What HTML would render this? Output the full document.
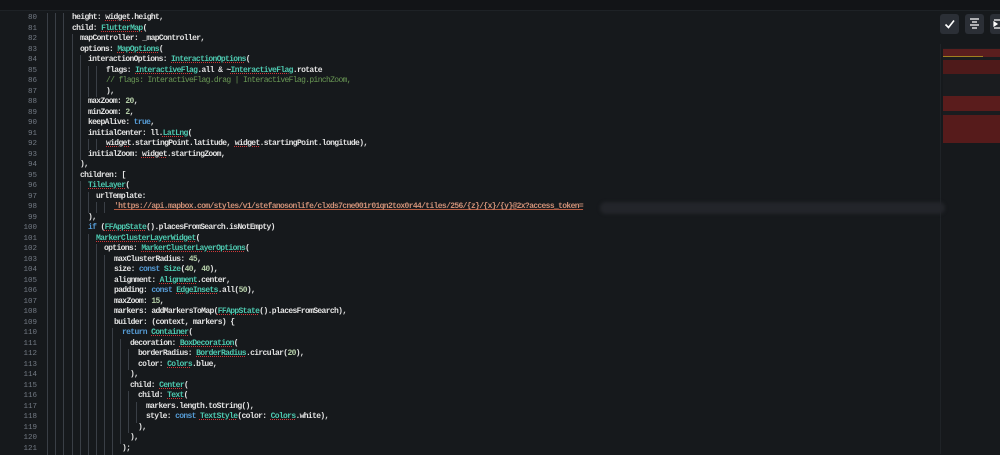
<!DOCTYPE html>
<html><head><meta charset="utf-8"><style>
body{margin:0;width:1000px;height:454px;background:#16191c;overflow:hidden;position:relative;font-family:"Liberation Mono",monospace;}
.top{position:absolute;left:0;top:0;width:1000px;height:10px;background:#121417;border-bottom:1px solid #1e2226}
.ln{position:absolute;left:0;width:37px;text-align:right;color:#737a84;font-size:7.5px;line-height:10.5px}
.l{position:absolute;white-space:pre;color:#e2e2e2;font-size:8px;font-weight:bold;letter-spacing:-0.65px;line-height:10.5px}
.g{position:absolute;width:1px;background:#3a3f46}
.c{color:#4ec9b0}.n{color:#b5cea8}.k{color:#569cd6}.m{color:#6a9955;font-weight:normal}.s{color:#ce9178;text-decoration:underline;text-decoration-color:#b85a40}
.w{text-decoration:underline dotted #d03838;text-decoration-thickness:1px}
.btn{position:absolute;top:14px;width:19px;height:20px;background:#2b2f36;border-radius:3px}
.mm{position:absolute;left:943px;background:#8a1f1f}
</style></head><body>
<div class="top"></div>
<div style="position:absolute;left:940px;top:44px;width:1px;height:410px;background:#1f2327"></div>
<div class="btn" style="left:940px"><svg width="19" height="20"><path d="M5.5 10.5l3 3 5.5-7" stroke="#fff" stroke-width="1.6" fill="none"/></svg></div>
<div class="btn" style="left:965px"><svg width="19" height="20"><path d="M5 5h9M7 8h5M5 11h9M7 14h5" stroke="#fff" stroke-width="1.3"/></svg></div>
<div class="btn" style="left:990px"><svg width="19" height="20"><path d="M4 6h8M4 14h8M4 8v4l3-2z" stroke="#fff" stroke-width="1.2" fill="#fff"/></svg></div>
<div style="position:absolute;left:943px;top:48px;width:57px;height:95px;background:#1a1c1f"></div>
<div class="mm" style="top:49px;height:8px;width:57px;background:#5a1e1e"></div>
<div class="mm" style="top:56px;height:1px;width:40px;background:#a08020"></div>
<div class="mm" style="top:60px;height:14px;width:57px;background:#4e1a1a"></div>
<div class="mm" style="top:96px;height:15px;width:57px;background:#5a1c1c"></div>
<div class="mm" style="top:115px;height:28px;width:57px;background:#561b1b"></div>
<div style="position:absolute;left:600px;top:202px;width:345px;height:12px;background:#23252a;border-radius:6px;filter:blur(1.5px)"></div>
<div id="code"></div>
<script>
const L=[
[72,'height: <span class="w">widget</span>.height,'],
[72,'child: <span class="c w">FlutterMap</span>('],
[80,'mapController: _mapController,'],
[80,'options: <span class="c w">MapOptions</span>('],
[88,'interactionOptions: <span class="c w">InteractionOptions</span>('],
[106,'flags: <span class="c w">InteractiveFlag</span>.all &amp; ~<span class="c w">InteractiveFlag</span>.rotate'],
[106,'<span class="m">// flags: InteractiveFlag.drag | InteractiveFlag.pinchZoom,</span>'],
[106,'),'],
[88,'maxZoom: <span class="n">20</span>,'],
[88,'minZoom: <span class="n">2</span>,'],
[88,'keepAlive: <span class="k">true</span>,'],
[88,'initialCenter: ll.<span class="c w">LatLng</span>('],
[106,'<span class="w">widget</span>.startingPoint.latitude, <span class="w">widget</span>.startingPoint.longitude),'],
[88,'initialZoom: <span class="w">widget</span>.startingZoom,'],
[80,'),'],
[80,'children: ['],
[88,'<span class="c w">TileLayer</span>('],
[96,'urlTemplate:'],
[114,'<span class="s">\'https://api.mapbox.com/styles/v1/stefanosonlife/clxds7cne001r01qn2tox0r44/tiles/256/{z}/{x}/{y}@2x?access_token=</span>'],
[88,'),'],
[88,'<span class="k">if</span> (<span class="c w">FFAppState</span>().placesFromSearch.isNotEmpty)'],
[96,'<span class="c w">MarkerClusterLayerWidget</span>('],
[104,'options: <span class="c w">MarkerClusterLayerOptions</span>('],
[114,'maxClusterRadius: <span class="n">45</span>,'],
[114,'size: <span class="k">const</span> <span class="c">Size</span>(<span class="n">40</span>, <span class="n">40</span>),'],
[114,'alignment: <span class="c w">Alignment</span>.center,'],
[114,'padding: <span class="k">const</span> <span class="c w">EdgeInsets</span>.all(<span class="n">50</span>),'],
[114,'maxZoom: <span class="n">15</span>,'],
[114,'markers: addMarkersToMap(<span class="c w">FFAppState</span>().placesFromSearch),'],
[114,'builder: (context, markers) {'],
[122,'<span class="k">return</span> <span class="c w">Container</span>('],
[130,'decoration: <span class="c w">BoxDecoration</span>('],
[138,'borderRadius: <span class="c w">BorderRadius</span>.circular(<span class="n">20</span>),'],
[138,'color: <span class="c w">Colors</span>.blue,'],
[130,'),'],
[130,'child: <span class="c w">Center</span>('],
[138,'child: <span class="c w">Text</span>('],
[146,'markers.length.toString(),'],
[146,'style: <span class="k">const</span> <span class="c w">TextStyle</span>(color: <span class="c w">Colors</span>.white),'],
[138,'),'],
[130,'),'],
[122,');']
];
let h='';
L.forEach((a,i)=>{
 const y=13+i*10.51;
 h+=`<div class="ln" style="top:${y}px">${80+i}</div>`;
 const gs=[47,55,63];
 for(let x=72;x<a[0]-2;x+=8)gs.push(x);
 gs.forEach(x=>h+=`<div class="g" style="left:${x}px;top:${y}px;height:10.6px"></div>`);
 h+=`<div class="l" style="left:${a[0]}px;top:${y}px">${a[1]}</div>`;
});
document.getElementById('code').innerHTML=h;
</script>
</body></html>
